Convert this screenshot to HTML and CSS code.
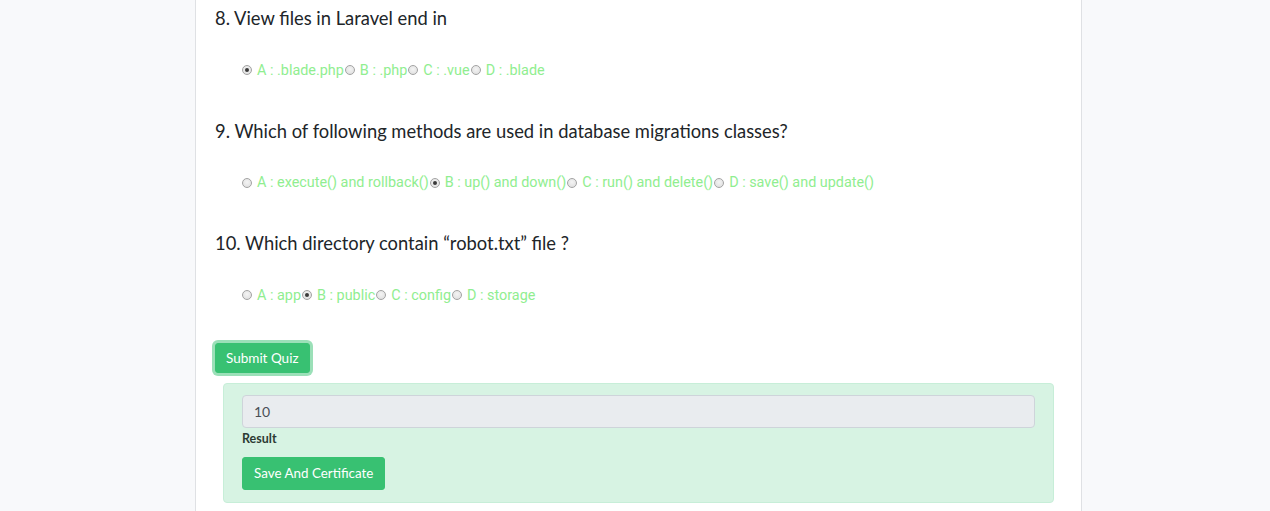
FILE: index.html
```html
<!DOCTYPE html>
<html>
<head>
<meta charset="utf-8">
<link rel="stylesheet" href="styles.css">
</head>
<body>
<div class="card">
  <div class="question">
    <h5 class="q-title">8. View files in Laravel end in</h5>
    <div class="options">
      <label class="opt"><span class="radio checked"></span>A : .blade.php</label><label class="opt"><span class="radio"></span>B : .php</label><label class="opt"><span class="radio"></span>C : .vue</label><label class="opt"><span class="radio"></span>D : .blade</label>
    </div>
  </div>
  <div class="question">
    <h5 class="q-title">9. Which of following methods are used in database migrations classes?</h5>
    <div class="options">
      <label class="opt"><span class="radio"></span>A : execute() and rollback()</label><label class="opt"><span class="radio checked"></span>B : up() and down()</label><label class="opt"><span class="radio"></span>C : run() and delete()</label><label class="opt"><span class="radio"></span>D : save() and update()</label>
    </div>
  </div>
  <div class="question">
    <h5 class="q-title">10. Which directory contain “robot.txt” file ?</h5>
    <div class="options">
      <label class="opt"><span class="radio"></span>A : app</label><label class="opt"><span class="radio checked"></span>B : public</label><label class="opt"><span class="radio"></span>C : config</label><label class="opt"><span class="radio"></span>D : storage</label>
    </div>
  </div>
  <button class="btn btn-submit">Submit Quiz</button>
  <div class="alert">
    <input class="result-input" type="text" value="10" readonly>
    <div class="result-label">Result</div>
    <button class="btn btn-save">Save And Certificate</button>
  </div>
</div>
</body>
</html>
```
FILE: styles.css
```css
html, body {
  margin: 0;
  padding: 0;
}
body {
  background: #f8f9fb;
  font-family: "Lato", "Noto Sans", sans-serif;
  color: #212529;
  height: 511px;
  overflow: hidden;
}
.card {
  box-sizing: border-box;
  margin-left: 195px;
  width: 887px;
  min-height: 520px;
  background: #fff;
  border-left: 1px solid #dfe1e4;
  border-right: 1px solid #dfe1e4;
  padding: 7px 19px 0 19px;
}
.question {
  height: 112.5px;
}
.q-title {
  margin: 0;
  font-size: 18.35px;
  font-weight: 400;
  line-height: 22px;
  color: #212529;
}
.options {
  margin-top: 31px;
  padding-left: 26px;
  height: 20px;
  display: flex;
  align-items: center;
  font-family: "Roboto", "Liberation Sans", sans-serif;
  font-size: 14.4px;
  color: #90ee90;
  white-space: nowrap;
}
.opt {
  display: inline-flex;
  align-items: center;
}
.radio {
  box-sizing: border-box;
  width: 10px;
  height: 10px;
  border-radius: 50%;
  border: 1px solid #a3a3a3;
  background: radial-gradient(circle at 50% 40%, #f4f4f4 0%, #dcdcdc 100%);
  margin: 0 5px 0 1px;
  position: relative;
}
.radio.checked::after {
  content: "";
  position: absolute;
  left: 2px;
  top: 2px;
  width: 4px;
  height: 4px;
  border-radius: 50%;
  background: #3a3a3a;
}
.btn {
  font-family: "Lato", "Noto Sans", sans-serif;
  color: #fff;
  background: #38c172;
  border: 1px solid #38c172;
  border-radius: 3px;
  cursor: pointer;
}
.btn-submit {
  display: block;
  margin-top: -2px;
  margin-left: 0;
  height: 30px;
  padding: 0 10px;
  font-size: 13.5px;
  box-shadow: 0 0 0 3px rgba(56, 193, 114, 0.5);
}
.alert {
  margin: 10px 8px 0 8px;
  background: #d7f3e3;
  border: 1px solid #c7eed8;
  border-radius: 4px;
  padding: 11px 18px 12px 18px;
}
.result-input {
  box-sizing: border-box;
  display: block;
  width: 100%;
  height: 33px;
  background: #e9ecef;
  border: 1px solid #ced4da;
  border-radius: 4px;
  padding: 0 11px;
  font-family: "Lato", "Noto Sans", sans-serif;
  font-size: 14px;
  color: #495057;
  outline: none;
}
.result-label {
  font-family: "Lato", "Noto Sans", sans-serif;
  font-size: 12.5px;
  font-weight: 700;
  color: #2d3b33;
  margin-top: 3px;
  line-height: 16px;
}
.btn-save {
  display: block;
  margin-top: 10px;
  height: 33px;
  padding: 0 11px;
  font-size: 13.4px;
}
```
